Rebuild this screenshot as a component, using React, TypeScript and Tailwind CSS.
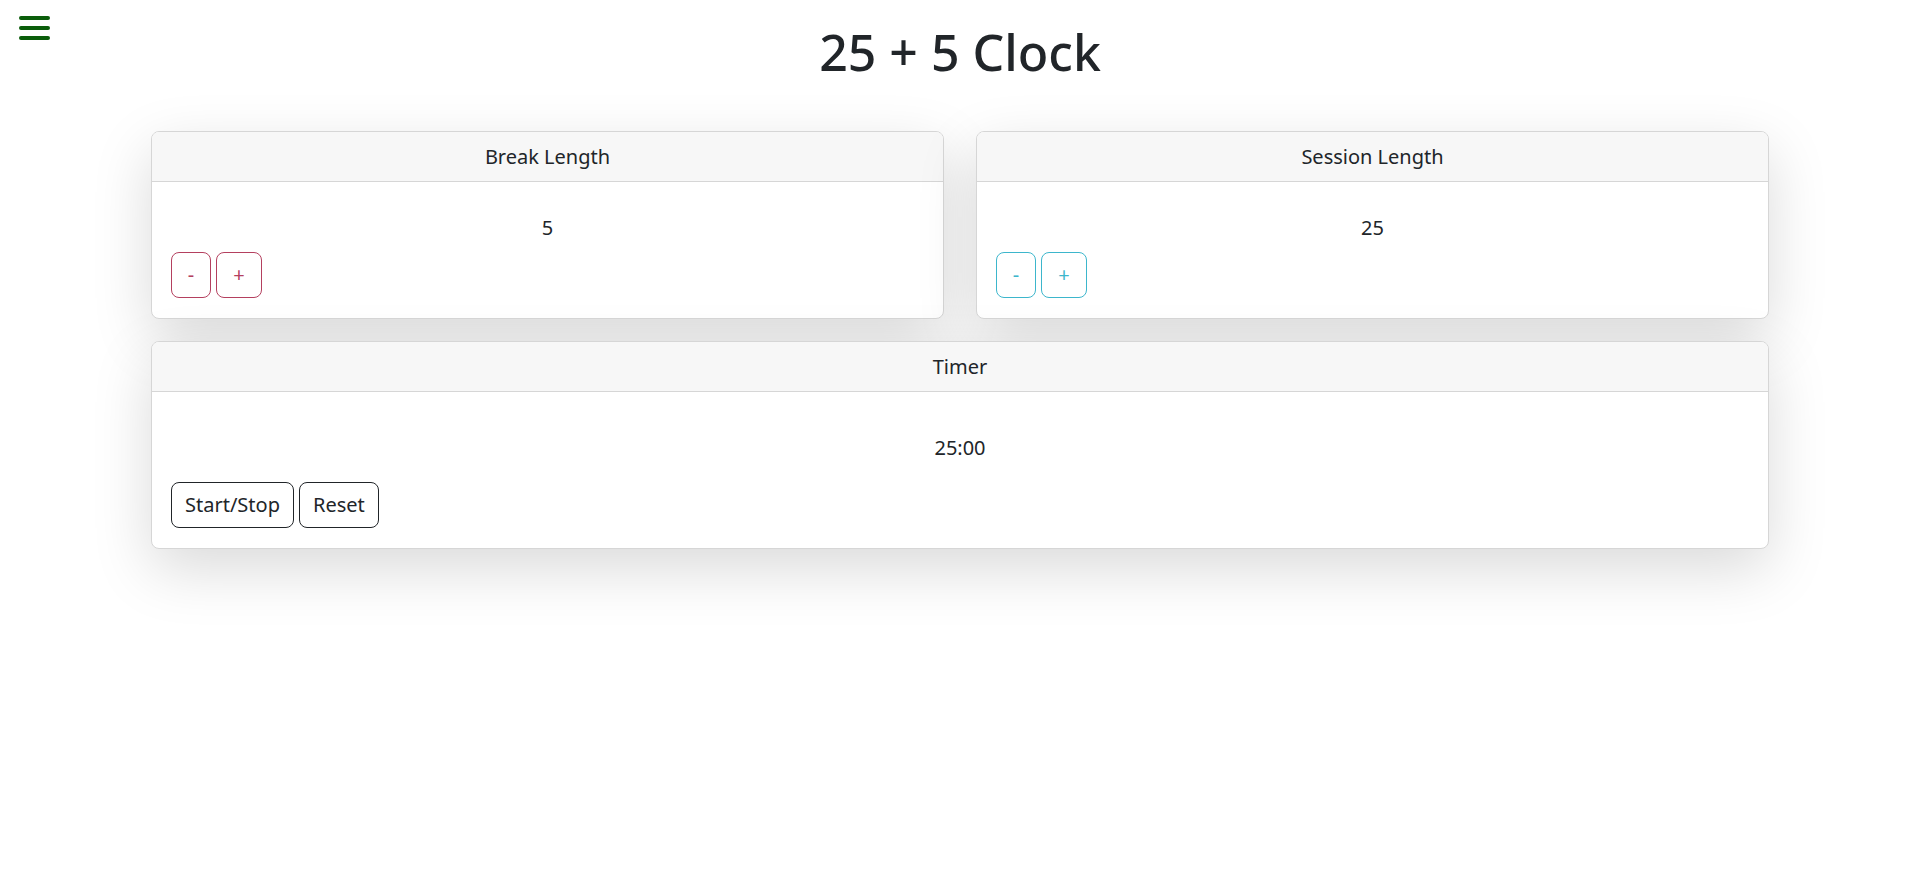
import React from "react";

interface LengthCardProps {
    title: string;
    value: number;
    tone: "red" | "teal";
}

const toneClasses = {
    red: "border-[#b4405f] text-[#b4405f]",
    teal: "border-[#3db6cc] text-[#3db6cc]",
};

const LengthCard: React.FC<LengthCardProps> = ({ title, value, tone }) => {
    return (
        <div className="flex-1 bg-white border border-[#d6d6d6] rounded-[8px] shadow-[0_20px_60px_rgba(0,0,0,0.15)] overflow-hidden">
            <div className="h-[50px] flex items-center justify-center bg-[#f7f7f7] border-b border-[#d6d6d6]">
                {title}
            </div>
            <div className="px-[19px] pt-[31px] pb-[20px]">
                <div className="h-[30px] leading-[30px] text-center">{value}</div>
                <div className="flex gap-[5px] mt-[9px]">
                    <button className={`h-[46px] w-[40px] border rounded-[8px] bg-white ${toneClasses[tone]}`}>
                        -
                    </button>
                    <button className={`h-[46px] w-[46px] border rounded-[8px] bg-white ${toneClasses[tone]}`}>
                        +
                    </button>
                </div>
            </div>
        </div>
    );
};

const App: React.FC = () => {
    return (
        <div className="relative min-h-[882px] bg-white text-[#212529] text-[20px] font-['Noto_Sans',sans-serif]">
            <button className="absolute left-[19px] top-[16px] flex flex-col gap-[6px]">
                <span className="block w-[31px] h-[4px] rounded-full bg-[#0b5d0b]" />
                <span className="block w-[31px] h-[4px] rounded-full bg-[#0b5d0b]" />
                <span className="block w-[31px] h-[4px] rounded-full bg-[#0b5d0b]" />
            </button>

            <h1 className="pt-[22px] h-[82px] leading-[60px] text-center text-[50px] font-medium">
                25 + 5 Clock
            </h1>

            <div className="w-[1618px] mx-auto mt-[49px] flex flex-col gap-[22px]">
                <div className="flex gap-[32px]">
                    <LengthCard title="Break Length" value={5} tone="red" />
                    <LengthCard title="Session Length" value={25} tone="teal" />
                </div>

                <div className="bg-white border border-[#d6d6d6] rounded-[8px] shadow-[0_20px_60px_rgba(0,0,0,0.15)] overflow-hidden">
                    <div className="h-[50px] flex items-center justify-center bg-[#f7f7f7] border-b border-[#d6d6d6]">
                        Timer
                    </div>
                    <div className="px-[19px] pt-[41px] pb-[20px]">
                        <div className="h-[30px] leading-[30px] text-center">25:00</div>
                        <div className="flex gap-[5px] mt-[19px]">
                            <button className="h-[46px] px-[13px] border border-[#212529] rounded-[8px] bg-white">
                                Start/Stop
                            </button>
                            <button className="h-[46px] px-[13px] border border-[#212529] rounded-[8px] bg-white">
                                Reset
                            </button>
                        </div>
                    </div>
                </div>
            </div>
        </div>
    );
};

export default App;
